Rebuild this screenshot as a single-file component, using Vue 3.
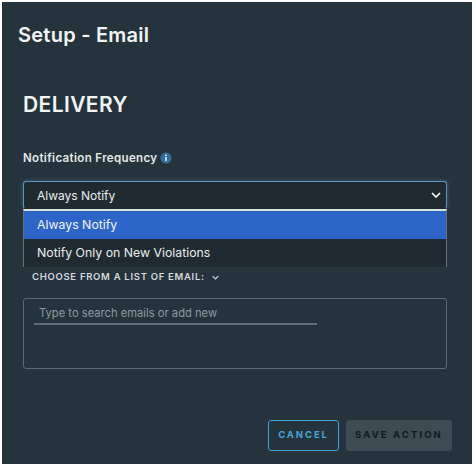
<script setup>
const options = [
  { label: 'Always Notify', active: true },
  { label: 'Notify Only on New Violations', active: false },
];
</script>

<template>
  <div class="panel">
    <h1 class="title">Setup - Email</h1>
    <section class="body">
      <h2 class="heading">DELIVERY</h2>
      <div class="label-row">
        <span class="label">Notification Frequency</span>
        <svg class="info" viewBox="0 0 12 12" width="12" height="12">
          <circle cx="6" cy="6" r="5.6" fill="#2f6f9c" />
          <rect x="5.1" y="5" width="1.8" height="4.2" fill="#c9dbe6" />
          <rect x="5.1" y="2.5" width="1.8" height="1.6" fill="#c9dbe6" />
        </svg>
      </div>
      <div class="select-wrap">
        <div class="select">
          <span>Always Notify</span>
          <svg class="chevron" viewBox="0 0 10 6" width="10" height="6">
            <path d="M1 1l4 4 4-4" fill="none" stroke="#fff" stroke-width="1.6" />
          </svg>
        </div>
        <ul class="menu">
          <li v-for="o in options" :key="o.label" :class="{ active: o.active }">{{ o.label }}</li>
        </ul>
      </div>
      <div class="choose">
        <span>CHOOSE FROM A LIST OF EMAIL:</span>
        <svg viewBox="0 0 10 6" width="7" height="5">
          <path d="M1 1l4 4 4-4" fill="none" stroke="#d5dadd" stroke-width="1.6" />
        </svg>
      </div>
      <div class="email-box">
        <div class="search">Type to search emails or add new</div>
      </div>
    </section>
    <footer class="actions">
      <button class="btn cancel">CANCEL</button>
      <button class="btn save">SAVE ACTION</button>
    </footer>
  </div>
</template>

<style scoped>
.panel {
  box-sizing: border-box;
  width: 470px;
  height: 462px;
  margin: 2px 0 0 2px;
  padding: 22px 20px 13px 16px;
  background: #25343c;
  color: #f2f4f5;
  font-family: Inter, "Liberation Sans", sans-serif;
  display: flex;
  flex-direction: column;
}

.title {
  margin: 0;
  font-size: 20px;
  line-height: 22px;
  font-weight: 600;
  letter-spacing: 0.25px;
}

.body {
  padding: 47px 5px 0 5px;
  flex: 1;
}

.heading {
  margin: 0;
  font-size: 21px;
  line-height: 24px;
  font-weight: 600;
  letter-spacing: 0.4px;
}

.label-row {
  display: flex;
  align-items: center;
  gap: 3px;
  margin-top: 34px;
  height: 14px;
}

.label {
  font-size: 11.5px;
  font-weight: 600;
  letter-spacing: 0.35px;
  color: #e4e8ea;
}

.select-wrap {
  position: relative;
  margin-top: 16px;
}

.select {
  box-sizing: border-box;
  height: 28px;
  display: flex;
  align-items: center;
  justify-content: space-between;
  padding: 0 5px 0 13px;
  background: #1f2b31;
  border: 1px solid #5b94c2;
  border-bottom-color: #1f2b31;
  border-radius: 3px;
  box-shadow: 0 0 4px rgba(91, 148, 194, 0.45);
  font-size: 12px;
  color: #e8ecee;
}

.menu {
  position: absolute;
  top: 28px;
  left: 0;
  right: 0;
  margin: 0;
  padding: 0;
  list-style: none;
  background: #1f2b31;
  border-top: 2px solid #dcdfe0;
  border-left: 1px solid #6a7276;
  border-right: 1px solid #6a7276;
  font-size: 12.3px;
  color: #e8ecee;
}

.menu li {
  height: 28px;
  line-height: 27px;
  padding-left: 13px;
}

.menu li.active {
  background: #2d64c8;
  color: #f0f4fb;
}

.choose {
  display: flex;
  align-items: center;
  gap: 7px;
  margin-top: 62px;
  padding-left: 9px;
  font-size: 9.5px;
  line-height: 12px;
  font-weight: 600;
  letter-spacing: 0.7px;
  color: #d5dadd;
}

.email-box {
  box-sizing: border-box;
  height: 71px;
  margin-top: 15px;
  padding: 6px 10px;
  border: 1px solid #5c6b72;
  border-radius: 3px;
}

.search {
  box-sizing: border-box;
  width: 283px;
  height: 20px;
  padding-left: 5px;
  border-bottom: 2px solid #5d6e76;
  font-size: 11.2px;
  line-height: 16px;
  color: #8d999f;
}

.actions {
  display: flex;
  justify-content: flex-end;
  gap: 7px;
}

.btn {
  box-sizing: border-box;
  height: 31px;
  padding: 0 0 2px;
  font-family: inherit;
  font-size: 9.5px;
  font-weight: 700;
  border-radius: 3px;
}

.cancel {
  width: 71px;
  background: transparent;
  border: 1px solid #3f9fd8;
  color: #45a5dc;
  letter-spacing: 1.9px;
}

.save {
  width: 106px;
  background: #3d4c53;
  border: none;
  color: #12191d;
  letter-spacing: 2.1px;
}
</style>

<style>
html, body {
  background: #fff;
}
</style>
